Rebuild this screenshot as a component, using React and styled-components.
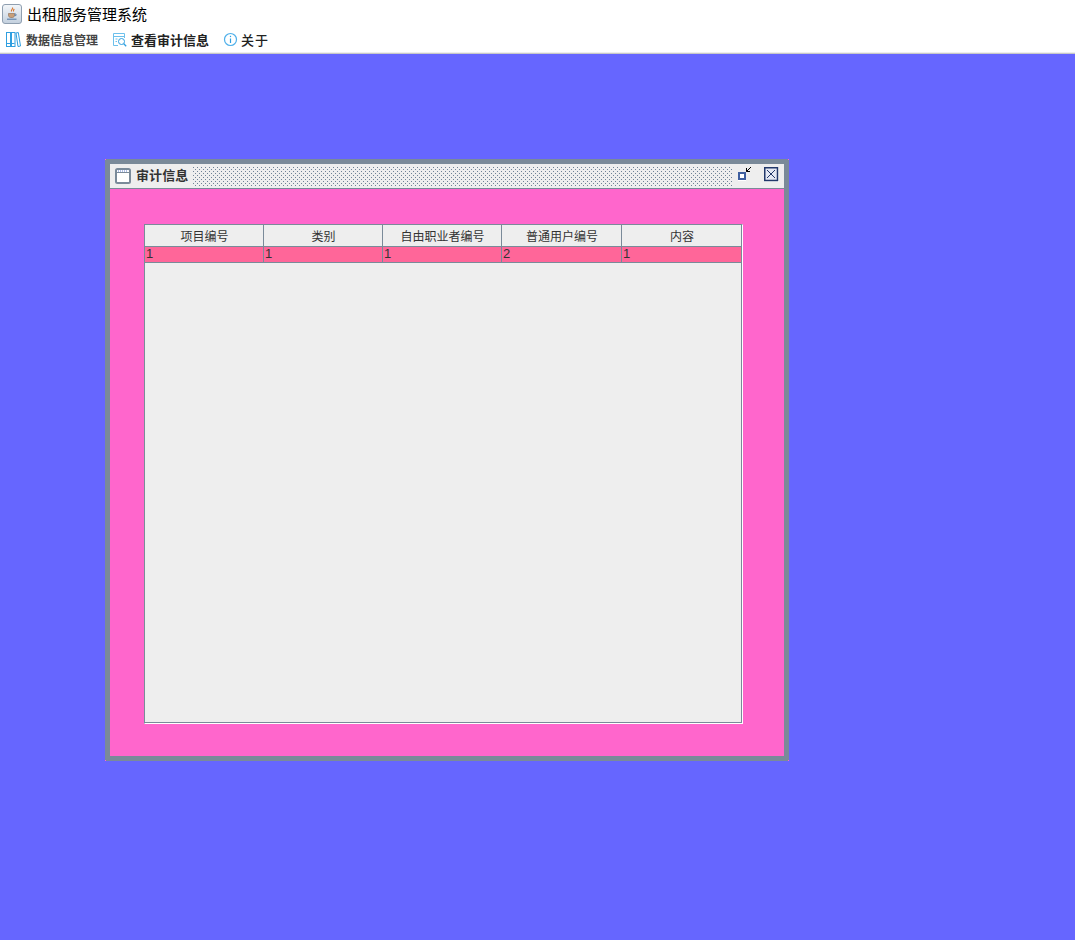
import React from "react";
import styled, { createGlobalStyle } from "styled-components";

const Global = createGlobalStyle`
  html, body { margin: 0; padding: 0; background: #6666ff; }
  body { font-family: "Noto Sans CJK SC", "Liberation Sans", sans-serif; }
`;
const Page = styled.div`
  width: 1075px; height: 940px; display: flex; flex-direction: column; overflow: hidden;
`;
const TitleBar = styled.div`
  height: 28px; background: #fff; display: flex; align-items: center; gap: 5px; padding-left: 2px; flex: none;
`;
const AppTitle = styled.span`
  font-size: 15px; color: #000; line-height: 28px;
`;
const MenuBar = styled.div`
  height: 25px; box-sizing: content-box; background: #fff; border-bottom: 1px solid #c8c8c8;
  display: flex; align-items: center; flex: none;
  padding: 0 0 0 6px; box-shadow: inset 0 -1px 0 #eee;
  & > * { position: relative; top: -1px; }
`;
const MenuItem = styled.div`
  display: flex; align-items: center; gap: ${p => p.$gap}px; margin-right: ${p => p.$mr}px;
  font-size: ${p => p.$size}px; font-weight: ${p => p.$weight}; color: ${p => p.$color};
  letter-spacing: ${p => p.$track}px;
`;
const Desktop = styled.div`
  position: relative; flex: 1; background: #6666ff;
`;
const Frame = styled.div`
  position: absolute; left: 105px; top: 105px; width: 684px; height: 602px; box-sizing: border-box;
  border: 5px solid #7a8a99; background: #ff66cc; display: flex; flex-direction: column;
`;
const Corner = styled.i`
  position: absolute; width: 1px; height: 1px; background: #ff66cc;
  ${p => p.$x}: -5px; ${p => p.$y}: -5px;
`;
const FrameTitle = styled.div`
  height: 25px; box-sizing: border-box; background: #eeeeee; border-bottom: 1px solid #7a8a99; flex: none;
  display: flex; align-items: center; padding-left: 5px;
`;
const FrameName = styled.span`
  font-size: 13px; font-weight: 700; color: #333; margin-left: 5px; width: 58px; flex: none;
  letter-spacing: .1px; padding-bottom: 3px; line-height: 18px;
`;
const Dither = styled.div`
  width: 539px; height: 19px; flex: none; align-self: flex-start; margin-top: 3px; margin-left: -1px;
  background-color: #eeeeee;
  background-image:
    conic-gradient(at 1px 1px, transparent 75%, #6f8296 0),
    conic-gradient(at 1px 1px, transparent 75%, #6f8296 0);
  background-size: 4px 4px;
  background-position: 0 0, 2px 2px;
`;
const Controls = styled.div`
  margin-left: 6px; display: flex; align-items: flex-start; gap: 12px; align-self: flex-start; margin-top: 2px;
`;
const Nudge = styled.span`
  display: block; height: 15px; margin-top: ${p => p.$top}px;
  svg { display: block; }
`;
const Content = styled.div`
  flex: 1; display: flex; padding: 35px 41px 32px 34px;
`;
const TableBox = styled.div`
  flex: 1; display: flex; flex-direction: column; box-sizing: border-box;
  border-left: 1px solid #7a8a99; border-top: 1px solid #7a8a99;
  border-right: 1px solid #fff; border-bottom: 1px solid #fff;
  background: #eeeeee; box-shadow: inset -1px -1px 0 #7a8a99;
`;
const Row = styled.div`
  display: grid; grid-template-columns: 119px 119px 119px 120px 120px; flex: none;
  height: ${p => p.$h}px; box-sizing: border-box;
  background: ${p => p.$bg}; border-bottom: 1px solid #7a8a99;
`;
const HeadCell = styled.div`
  font-size: 12px; color: #333; display: flex; align-items: center; justify-content: center;
  border-right: 1px solid #7a8a99; padding-left: 1px;
`;
const BodyCell = styled.div`
  font-family: "Liberation Sans", sans-serif; font-size: 13px; color: #333; padding-left: 1px;
  line-height: 14px; border-right: 1px solid #7a8a99;
`;

const JavaIcon = () => (
  <svg width="20" height="20" viewBox="0 0 20 20">
    <defs>
      <linearGradient id="jb" x1="0" y1="0" x2="0" y2="1">
        <stop offset="0" stopColor="#f4f7fa" />
        <stop offset="1" stopColor="#c3d0de" />
      </linearGradient>
    </defs>
    <rect x="0.5" y="0.5" width="19" height="19" rx="2.5" fill="url(#jb)" stroke="#8f9fb0" />
    <path d="M10.5 3.5c1 1.4-2 2.2-1 4M12.3 5c-1 1-1.2 1.5-.7 2.5" fill="none" stroke="#d9772f" strokeWidth="1.1" />
    <path d="M6.5 9.5h6v1.8c0 1.3-.9 2.2-2 2.2h-2c-1.100 0-2-.9-2-2.200z" fill="#c9a07a" stroke="#8a6a50" strokeWidth=".6" />
    <path d="M12.500 10h1.500v1.600h-1.500" fill="none" stroke="#5a7fa8" strokeWidth=".9" />
    <path d="M5 15.200h9.500" stroke="#5a7fa8" strokeWidth="1.100" />
  </svg>
);
const BooksIcon = () => (
  <svg width="15" height="17" viewBox="0 0 15 17" fill="none" stroke="#2f9fe0" strokeWidth="1">
    <rect x="0.500" y="1.500" width="4" height="14" />
    <rect x="5.500" y="1.500" width="3.500" height="14" />
    <path d="M10 2l2.300-.5 2.200 13.500-2.500.5z" />
    <path d="M1 12.500h3M6 12.500h2.500" />
  </svg>
);
const AuditIcon = () => (
  <svg width="15" height="15" viewBox="0 0 15 15" fill="none" stroke="#6cc0ec" strokeWidth="1">
    <path d="M6 13.500H1.500v-12h11V6" />
    <path d="M1.500 4.500h11M3.500 7h2M3.500 9.500h1.500" />
    <circle cx="9.500" cy="9.500" r="3" stroke="#2f9fe0" />
    <path d="M11.800 11.800l2.400 2.400" stroke="#2f9fe0" strokeWidth="1.300" />
  </svg>
);
const InfoIcon = () => (
  <svg width="15" height="15" viewBox="0 0 15 15" fill="none">
    <circle cx="7.500" cy="7.500" r="6" stroke="#4fb0ea" strokeWidth="1.200" />
    <path d="M7.500 6.500v4.500" stroke="#2f9fe0" strokeWidth="1.200" />
    <path d="M7.500 3.800v1.300" stroke="#2f9fe0" strokeWidth="1.200" />
  </svg>
);
const WindowIcon = () => (
  <svg width="16" height="16" viewBox="0 0 16 16">
    <rect x="1" y="1" width="14" height="14" rx="1.500" fill="#fff" stroke="#7a8a99" strokeWidth="2" />
    <path d="M2 4.500h12" stroke="#7a8a99" strokeWidth="1" />
    <path d="M3 3h10" stroke="#5f7fd0" strokeWidth="1" strokeDasharray="1 1" />
  </svg>
);
const RestoreIcon = () => (
  <svg width="14" height="15" viewBox="0 0 14 15">
    <rect x="0" y="7" width="8" height="8" fill="#fff" />
    <rect x="1" y="7" width="6" height="6" fill="#fff" stroke="#3f5f9f" strokeWidth="2" />
    <path d="M13 1L8.500 5.500M8.500 2v3.500H12" fill="none" stroke="#000" strokeWidth="1" />
  </svg>
);
const CloseIcon = () => (
  <svg width="15" height="15" viewBox="0 0 15 15">
    <rect x="0" y="0" width="15" height="15" fill="#fff" />
    <rect x="0.750" y="0.750" width="12.750" height="12.750" fill="#e4e8f4" stroke="#22386a" strokeWidth="1.500" />
    <path d="M3 3l8 8M11 3l-8 8" stroke="#22386a" strokeWidth="1" />
  </svg>
);

const columns = ["项目编号", "类别", "自由职业者编号", "普通用户编号", "内容"];
const values = ["1", "1", "1", "2", "1"];

export default function App() {
  return (
    <Page>
      <Global />
      <TitleBar>
        <JavaIcon />
        <AppTitle>出租服务管理系统</AppTitle>
      </TitleBar>
      <MenuBar>
        <MenuItem $gap={5} $mr={14} $size={12} $weight={700} $color="#444" $track={0}><BooksIcon />数据信息管理</MenuItem>
        <MenuItem $gap={4} $mr={14} $size={13} $weight={700} $color="#222" $track={0}><AuditIcon />查看审计信息</MenuItem>
        <MenuItem $gap={3} $mr={0} $size={13} $weight={500} $color="#222" $track={1}><InfoIcon />关于</MenuItem>
      </MenuBar>
      <Desktop>
        <Frame>
          <Corner $x="left" $y="top" />
          <Corner $x="right" $y="top" />
          <Corner $x="left" $y="bottom" />
          <Corner $x="right" $y="bottom" />
          <FrameTitle>
            <WindowIcon />
            <FrameName>审计信息</FrameName>
            <Dither />
            <Controls>
              <Nudge $top={0}><RestoreIcon /></Nudge>
              <Nudge $top={1}><CloseIcon /></Nudge>
            </Controls>
          </FrameTitle>
          <Content>
            <TableBox>
              <Row $h={22} $bg="#eeeeee">
                {columns.map(c => <HeadCell key={c}>{c}</HeadCell>)}
              </Row>
              <Row $h={16} $bg="#ff6699">
                {values.map((v, i) => <BodyCell key={i}>{v}</BodyCell>)}
              </Row>
            </TableBox>
          </Content>
        </Frame>
      </Desktop>
    </Page>
  );
}
